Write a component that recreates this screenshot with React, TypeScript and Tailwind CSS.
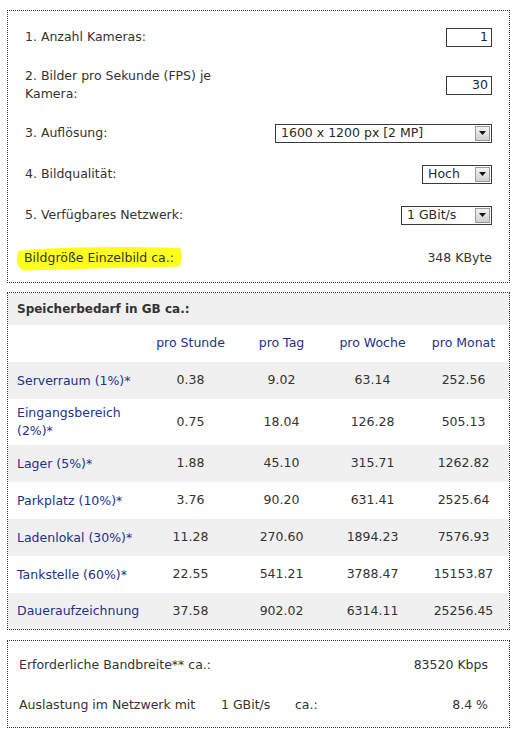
const font = { fontFamily: '"DejaVu Sans", Verdana, sans-serif' }

const rows = [
  { label: 'Serverraum (1%)*', values: ['0.38', '9.02', '63.14', '252.56'], h: 'h-[37px]' },
  { label: 'Eingangsbereich (2%)*', values: ['0.75', '18.04', '126.28', '505.13'], h: 'h-[46px]', wrap: true },
  { label: 'Lager (5%)*', values: ['1.88', '45.10', '315.71', '1262.82'], h: 'h-[37px]' },
  { label: 'Parkplatz (10%)*', values: ['3.76', '90.20', '631.41', '2525.64'], h: 'h-[37px]' },
  { label: 'Ladenlokal (30%)*', values: ['11.28', '270.60', '1894.23', '7576.93'], h: 'h-[37px]' },
  { label: 'Tankstelle (60%)*', values: ['22.55', '541.21', '3788.47', '15153.87'], h: 'h-[37px]' },
  { label: 'Daueraufzeichnung', values: ['37.58', '902.02', '6314.11', '25256.45'], h: 'h-[36px]' },
]

function NumberBox({ value }: { value: string }) {
  return (
    <div className="w-[46px] h-[19px] border border-[#3a3a3a] bg-white flex items-center justify-end pr-[3px] text-[#1c1c3c]">
      {value}
    </div>
  )
}

function Select({ value, width }: { value: string; width: string }) {
  return (
    <div className={`${width} h-[19px] border border-[#3a3a3a] bg-white flex items-center`}>
      <span className="flex-1 pl-[5px] text-[#2a2a2a] whitespace-nowrap overflow-hidden">{value}</span>
      <span className="w-[15px] h-[15px] mr-[1px] border border-[#9a9a9a] bg-gradient-to-b from-[#f4f4f4] to-[#cfcfcf] flex items-center justify-center">
        <svg width="7" height="4" viewBox="0 0 7 4">
          <path d="M0 0h7L3.5 4z" fill="#111" />
        </svg>
      </span>
    </div>
  )
}

function FormRow({ h, label, children }: { h: string; label: React.ReactNode; children: React.ReactNode }) {
  return (
    <div className={`${h} flex items-center justify-between`}>
      <div className="leading-[18px] text-[#333]">{label}</div>
      {children}
    </div>
  )
}

export default function App() {
  return (
    <div className="w-[519px] min-h-[736px] bg-white pt-[10px] pl-[7px] text-[12.5px] text-[#333]" style={font}>
      <div className="w-[503px] border border-dotted border-[#333] pt-[6px] pb-[1px] pl-[17px] pr-[17px]">
        <FormRow h="h-[40px]" label="1. Anzahl Kameras:">
          <NumberBox value="1" />
        </FormRow>
        <FormRow
          h="h-[56px]"
          label={
            <>
              2. Bilder pro Sekunde (FPS) je
              <br />
              Kamera:
            </>
          }
        >
          <NumberBox value="30" />
        </FormRow>
        <FormRow h="h-[40px]" label="3. Auflösung:">
          <Select value="1600 x 1200 px [2 MP]" width="w-[217px]" />
        </FormRow>
        <FormRow h="h-[42px]" label="4. Bildqualität:">
          <Select value="Hoch" width="w-[70px]" />
        </FormRow>
        <FormRow h="h-[40px]" label="5. Verfügbares Netzwerk:">
          <Select value="1 GBit/s" width="w-[91px]" />
        </FormRow>
        <div className="h-[46px] flex items-center justify-between">
          <span className="relative -ml-[11px] px-[10px] py-[4px] text-[#333]">
            <svg className="absolute inset-0 w-full h-full" viewBox="0 0 170 26" preserveAspectRatio="none">
              <path
                d="M4 6 C30 2 120 1 166 3 C169 8 168 18 165 21 C120 22 60 23 12 25 C5 24 2 18 3 12 Z"
                fill="#ffff1e"
              />
            </svg>
            <span className="relative">Bildgröße Einzelbild ca.:</span>
          </span>
          <span>348 KByte</span>
        </div>
      </div>

      <div className="w-[503px] mt-[9px] border border-dotted border-[#333]">
        <div className="h-[32px] bg-[#f0f0f0] flex items-center pl-[9px] font-bold text-[12px] text-[#333]">
          Speicherbedarf in GB ca.:
        </div>
        <div className="grid grid-cols-[137px_91px_91px_91px_91px] h-[37px] items-center text-[#22318a]">
          <div />
          <div className="text-center">pro Stunde</div>
          <div className="text-center">pro Tag</div>
          <div className="text-center">pro Woche</div>
          <div className="text-center">pro Monat</div>
        </div>
        {rows.map((r, i) => (
          <div
            key={r.label}
            className={`grid grid-cols-[137px_91px_91px_91px_91px] ${r.h} items-center ${
              i % 2 === 0 ? 'bg-[#f0f0f0]' : 'bg-white'
            }`}
          >
            <div className="pl-[9px] text-[#22318a] leading-[18px] whitespace-nowrap">
              {r.wrap ? (
                <>
                  Eingangsbereich
                  <br />
                  (2%)*
                </>
              ) : (
                r.label
              )}
            </div>
            {r.values.map((v, j) => (
              <div key={j} className="text-center">
                {v}
              </div>
            ))}
          </div>
        ))}
      </div>

      <div className="w-[503px] mt-[10px] border border-dotted border-[#333] pt-[4px] pb-[2px] pl-[11px] pr-[21px]">
        <div className="h-[40px] flex items-center justify-between">
          <span>Erforderliche Bandbreite** ca.:</span>
          <span>83520 Kbps</span>
        </div>
        <div className="h-[40px] flex items-center">
          <span className="w-[202px]">Auslastung im Netzwerk mit</span>
          <span className="w-[74px]">1 GBit/s</span>
          <span>ca.:</span>
          <span className="flex-1 text-right">8.4 %</span>
        </div>
      </div>
    </div>
  )
}
